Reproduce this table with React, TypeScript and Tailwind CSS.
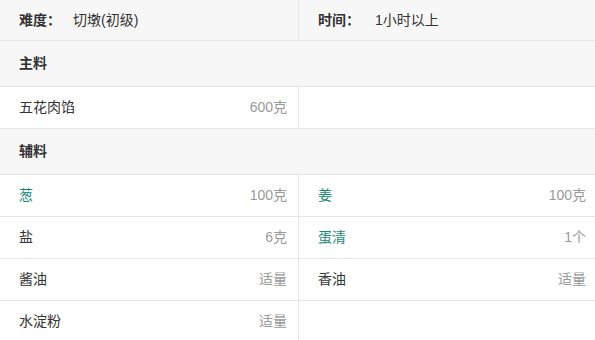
const font = { fontFamily: '"Liberation Sans", "Noto Sans CJK SC", sans-serif' };

type Item = { name: string; amount: string; green?: boolean };

const mainItems: Item[] = [{ name: '五花肉馅', amount: '600克' }];

const subItems: Item[] = [
  { name: '葱', amount: '100克', green: true },
  { name: '姜', amount: '100克', green: true },
  { name: '盐', amount: '6克' },
  { name: '蛋清', amount: '1个', green: true },
  { name: '酱油', amount: '适量' },
  { name: '香油', amount: '适量' },
  { name: '水淀粉', amount: '适量' },
];

function Cell({ item, left }: { item?: Item; left: boolean }) {
  return (
    <div
      className={`flex items-center justify-between h-[42px] pl-[19px] border-b border-[#e6e6e6] ${
        left ? 'w-[299px] pr-[11px] border-r' : 'flex-1 pr-[9px]'
      }`}
    >
      {item && (
        <>
          <span className={item.green ? 'text-[#1a8a78]' : 'text-[#333]'}>{item.name}</span>
          <span className="text-[#999]">{item.amount}</span>
        </>
      )}
    </div>
  );
}

function Rows({ items }: { items: Item[] }) {
  const rows: Item[][] = [];
  for (let i = 0; i < items.length; i += 2) rows.push(items.slice(i, i + 2));
  return (
    <>
      {rows.map((r, i) => (
        <div key={i} className="flex">
          <Cell item={r[0]} left />
          <Cell item={r[1]} left={false} />
        </div>
      ))}
    </>
  );
}

function Header({ title }: { title: string }) {
  return (
    <div className="flex items-center h-[46px] pl-[19px] bg-[#f7f7f7] border-b border-[#e6e6e6] font-bold text-[#333]">
      {title}
    </div>
  );
}

export default function App() {
  return (
    <div className="w-[595px] h-[340px] bg-white overflow-hidden text-[14px]" style={font}>
      {/* 难度 / 时间 */}
      <div className="flex h-[41px] bg-[#f7f7f7] border-b border-[#e6e6e6] text-[#333]">
        <div className="w-[299px] flex items-center pl-[19px] border-r border-[#e6e6e6]">
          <span className="font-bold w-[54px]">难度：</span>
          <span>切墩(初级)</span>
        </div>
        <div className="flex-1 flex items-center pl-[19px]">
          <span className="font-bold w-[57px]">时间：</span>
          <span>1小时以上</span>
        </div>
      </div>

      <Header title="主料" />
      <Rows items={mainItems} />

      <Header title="辅料" />
      <Rows items={subItems} />
    </div>
  );
}
